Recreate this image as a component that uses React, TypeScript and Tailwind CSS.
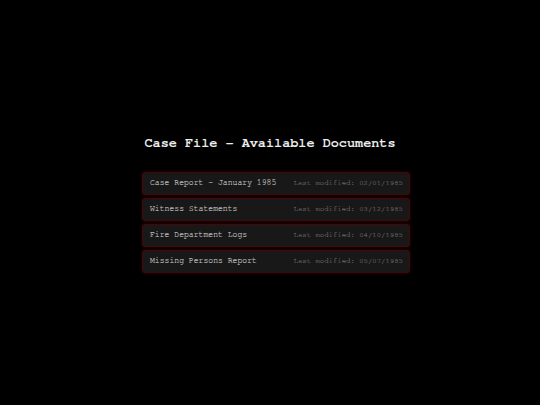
const docs = [
  { name: 'Case Report - January 1985', date: '02/01/1985' },
  { name: 'Witness Statements', date: '03/12/1985' },
  { name: 'Fire Department Logs', date: '04/10/1985' },
  { name: 'Missing Persons Report', date: '05/07/1985' },
];

export default function App() {
  return (
    <div
      className="w-[540px] h-[405px] bg-black flex flex-col items-center pt-[136px]"
      style={{ fontFamily: 'FreeMono, "Liberation Mono", "Courier New", monospace' }}
    >
      <div className="w-[268px] ml-[12px] flex flex-col">
        <h1 className="text-[13.5px] font-bold text-[#ececec] text-center leading-[14px] mb-[22px] -ml-[12px]">
          Case File - Available Documents
        </h1>
        <div className="flex flex-col gap-[3px]">
          {docs.map((d) => (
            <div
              key={d.name}
              className="h-[23px] flex items-center justify-between pl-[7px] pr-[6px] rounded-[3px] bg-[#181818] border border-[#3d0b0b] shadow-[0_0_3px_rgba(120,0,0,0.6)]"
            >
              <span className="text-[8.1px] text-[#bdbdbd] [-webkit-text-stroke:0.15px_#bdbdbd]">{d.name}</span>
              <span className="text-[7.3px] text-[#666] [-webkit-text-stroke:0.15px_#666]">
                Last modified: {d.date}
              </span>
            </div>
          ))}
        </div>
      </div>
    </div>
  );
}
